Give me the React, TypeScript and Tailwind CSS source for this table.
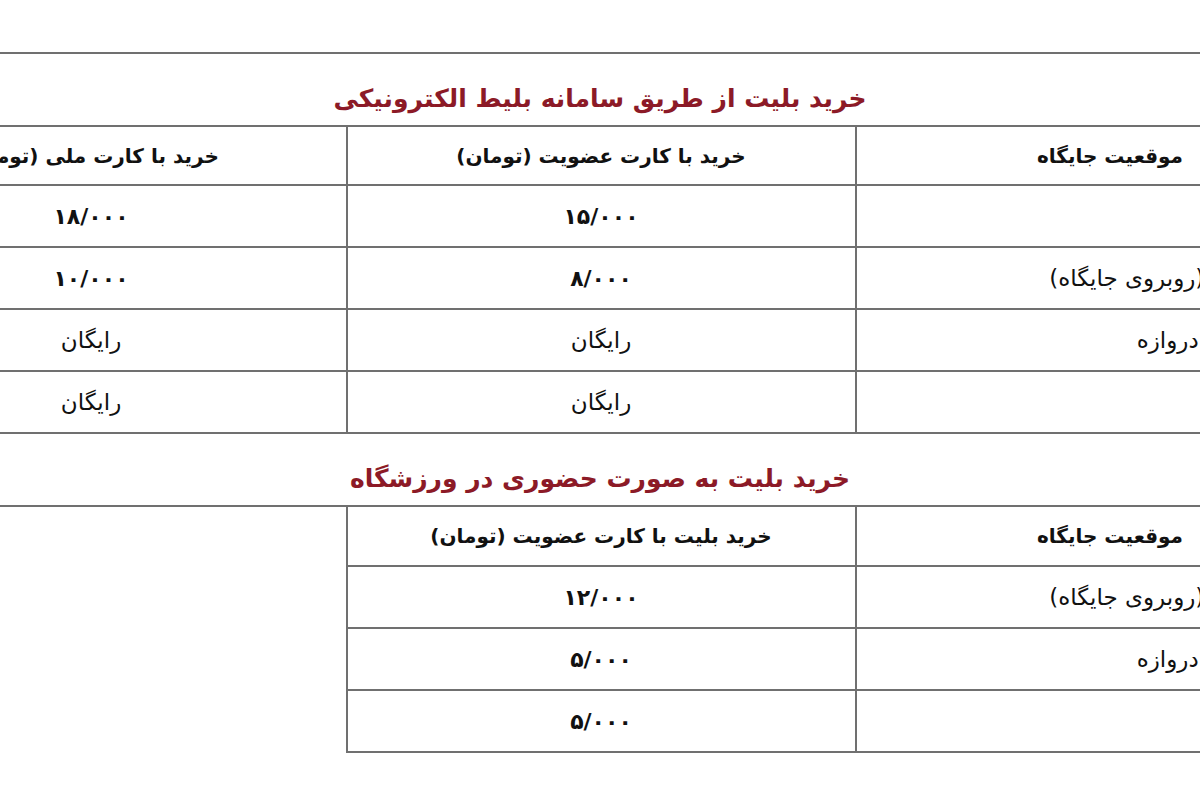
const electronic = [
  { place: "ویژه", member: "۱۵/۰۰۰", national: "۱۸/۰۰۰" },
  { place: "سکو (روبروی جایگاه)", member: "۸/۰۰۰", national: "۱۰/۰۰۰" },
  { place: "پشت دروازه", member: "رایگان", national: "رایگان" },
  { place: "", member: "رایگان", national: "رایگان" },
];

const inPerson = [
  { place: "سکو (روبروی جایگاه)", member: "۱۲/۰۰۰" },
  { place: "پشت دروازه", member: "۵/۰۰۰" },
  { place: "", member: "۵/۰۰۰" },
];

const line = "border-[#707070]";

// prices are digit strings, "رایگان" is a word
const isNum = (s: string) => /[۰-۹]/.test(s);

function Value({ text }: { text: string }) {
  return isNum(text) ? (
    <span className="text-[22px] font-bold tracking-[8px]">{text}</span>
  ) : (
    <span className="text-[23px]">{text}</span>
  );
}

function Title({ children }: { children: React.ReactNode }) {
  return (
    <div
      className={`flex h-[73px] items-center justify-center border-b-2 ${line} pt-[18px]`}
    >
      <h2 className="text-[25px] font-bold text-[#8c1a27]">{children}</h2>
    </div>
  );
}

export default function App() {
  return (
    <div
      dir="rtl"
      className="flex min-h-[800px] justify-center overflow-hidden bg-white font-['DejaVu_Sans',sans-serif] text-[#111]"
    >
      <div className="w-[1527px] shrink-0 pt-[52px]">
        <div className={`border-t-2 ${line}`} />

        <Title>خرید بلیت از طریق سامانه بلیط الکترونیکی</Title>

        {/* electronic tickets */}
        <div className={`grid h-[59px] grid-cols-3 border-b-2 ${line} text-[20px] font-bold`}>
          <div className={`flex items-center justify-center border-l-2 ${line}`}>
            موقعیت جایگاه
          </div>
          <div className={`flex items-center justify-center border-l-2 ${line}`}>
            خرید با کارت عضویت (تومان)
          </div>
          <div className="flex items-center justify-center">
            خرید با کارت ملی (تومان)
          </div>
        </div>
        {electronic.map((r, i) => (
          <div key={i} className={`grid h-[62px] grid-cols-3 border-b-2 ${line}`}>
            <div className={`flex items-center border-l-2 ${line} pr-[108px] text-[23px]`}>
              {r.place}
            </div>
            <div className={`flex items-center justify-center border-l-2 ${line}`}>
              <Value text={r.member} />
            </div>
            <div className="flex items-center justify-center">
              <Value text={r.national} />
            </div>
          </div>
        ))}

        <Title>خرید بلیت به صورت حضوری در ورزشگاه</Title>

        {/* at the stadium */}
        <div className="grid h-[60px] grid-cols-3 text-[20px] font-bold">
          <div className={`flex items-center justify-center border-b-2 border-l-2 ${line}`}>
            موقعیت جایگاه
          </div>
          <div className={`flex items-center justify-center border-b-2 border-l-2 ${line}`}>
            خرید بلیت با کارت عضویت (تومان)
          </div>
          <div />
        </div>
        {inPerson.map((r, i) => (
          <div key={i} className="grid h-[62px] grid-cols-3">
            <div
              className={`flex items-center border-b-2 border-l-2 ${line} pr-[108px] text-[23px]`}
            >
              {r.place}
            </div>
            <div className={`flex items-center justify-center border-b-2 border-l-2 ${line}`}>
              <Value text={r.member} />
            </div>
            <div />
          </div>
        ))}
      </div>
    </div>
  );
}
